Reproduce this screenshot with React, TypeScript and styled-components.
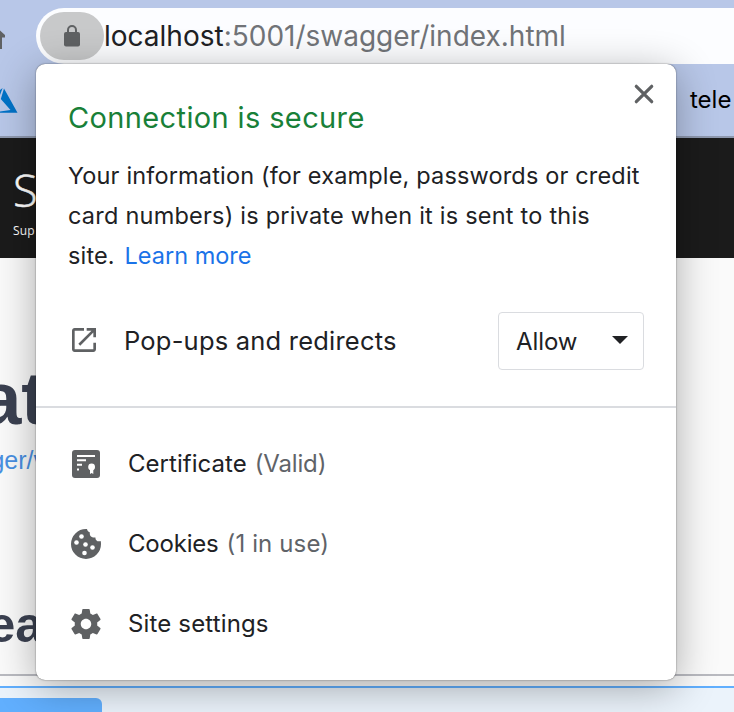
import React from 'react';
import styled, { createGlobalStyle } from 'styled-components';

const GlobalStyle = createGlobalStyle`
  * { box-sizing: border-box; }
  body { margin: 0; }
`;

const Window = styled.div`
  position: relative;
  width: 734px;
  height: 712px;
  overflow: hidden;
  background: #fafafa;
  color: #202124;
  font-family: Inter, 'Noto Sans', sans-serif;
  white-space: nowrap;
`;

const Toolbar = styled.div`
  display: flex;
  align-items: flex-start;
  height: 64px;
  padding-top: 8px;
  background: #b8c7e8;
`;

const HomeIcon = styled.svg`
  width: 36px;
  height: 56px;
  flex: none;
`;

const AddressBar = styled.div`
  display: flex;
  align-items: center;
  flex: 1;
  height: 56px;
  padding-left: 4px;
  border-radius: 28px 0 0 28px;
  background: #fcfdff;
`;

const LockChip = styled.div`
  display: grid;
  place-items: center;
  width: 64px;
  height: 48px;
  border-radius: 24px;
  background: #c8c9ca;
`;

const Url = styled.div`
  font-size: 28px;
  line-height: 56px;
  letter-spacing: 0;
  color: #717478;
`;

const Host = styled.span`
  color: #202124;
`;

const Bookmarks = styled.div`
  display: flex;
  justify-content: space-between;
  height: 74px;
  border-bottom: 2px solid #8e98ae;
  background: #b8c7e8;
`;

const AzureIcon = styled.svg`
  width: 20px;
  height: 72px;
`;

const BookmarkLabel = styled.span`
  width: 44px;
  font-size: 24px;
  line-height: 71px;
  color: #000;
`;

const SiteHeader = styled.header`
  height: 120px;
  padding: 21px 0 0 13px;
  background: #1b1b1b;
  color: #fff;
  font-family: 'Open Sans', sans-serif;
`;

const Brand = styled.div`
  font-size: 45px;
  line-height: 62px;
  font-weight: 300;
  -webkit-text-stroke: 0.5px #fff;
`;

const Tagline = styled.div`
  font-size: 12px;
  line-height: 19px;
  letter-spacing: 0.2px;
`;

const Clipped = styled.div<{ $width: number }>`
  display: flex;
  justify-content: flex-end;
  width: ${(p) => p.$width}px;
  font-family: 'Liberation Sans', Arial, sans-serif;
`;

const ApiTitle = styled(Clipped)`
  padding-top: 101px;
  font-size: 74px;
  line-height: 80px;
  font-weight: 700;
  color: #3b4151;
`;

const SpecLink = styled(Clipped)`
  padding-top: 5px;
  font-size: 25px;
  line-height: 32px;
  color: #4990e2;
`;

const TagTitle = styled(Clipped)`
  height: 198px;
  padding-top: 119px;
  font-size: 50px;
  line-height: 60px;
  font-weight: 700;
  color: #3b4151;
`;

const TagRule = styled.div`
  height: 2px;
  margin-bottom: 10px;
  background: #b9bac0;
`;

const Operation = styled.div`
  height: 26px;
  padding-top: 10px;
  border-top: 2px solid #61affe;
  background: #ebf3fb;
`;

const MethodBadge = styled.div`
  width: 102px;
  height: 14px;
  border-radius: 0 6px 0 0;
  background: #61affe;
`;

const Popover = styled.section`
  position: absolute;
  left: 36px;
  top: 64px;
  width: 640px;
  height: 616px;
  border-radius: 9px;
  background: #fff;
  box-shadow: 0 0 1.5px rgba(0, 0, 0, 0.65), 0 8px 40px rgba(0, 0, 0, 0.32);
`;

const Summary = styled.div`
  height: 344px;
  padding: 32px 32px 0;
  border-bottom: 2px solid #dadce0;
`;

const TitleRow = styled.div`
  display: flex;
  justify-content: space-between;
  height: 60px;
`;

const Title = styled.h1`
  margin: 0;
  font-size: 29px;
  line-height: 44px;
  font-weight: 400;
  letter-spacing: 0.37px;
  color: #188038;
`;

const CloseButton = styled.button`
  display: flex;
  width: 20px;
  height: 20px;
  margin: -12px -10px 0 0;
  padding: 0;
  border: 0;
  background: none;
`;

const Description = styled.p`
  margin: 0;
  font-size: 23.5px;
  line-height: 40px;
`;

const Line = styled.span<{ $spacing: number }>`
  display: block;
  letter-spacing: ${(p) => p.$spacing}px;
`;

const Link = styled.a`
  margin-left: 3px;
  letter-spacing: 0;
  color: #1a73e8;
`;

const PermissionRow = styled.div`
  display: flex;
  align-items: center;
  height: 58px;
  margin-top: 36px;
`;

const Permission = styled.div`
  display: flex;
  align-items: center;
  flex: 1;
  padding-bottom: 2px;
`;

const PermissionLabel = styled.span`
  padding-left: 24px;
  font-size: 25.5px;
  letter-spacing: 0.21px;
`;

const Select = styled.div`
  display: flex;
  align-items: center;
  justify-content: space-between;
  width: 146px;
  height: 58px;
  padding: 1px 15px 0 17px;
  border: 1px solid #dadce0;
  border-radius: 4px;
  font-size: 24px;
  letter-spacing: -0.1px;
`;

const Arrow = styled.svg`
  width: 16px;
  height: 8px;
  margin-bottom: 4px;
`;

const Menu = styled.div`
  padding-top: 16px;
`;

const MenuRow = styled.div`
  display: flex;
  align-items: center;
  height: 80px;
  padding-left: 34px;
  font-size: 24px;
  line-height: 30px;
`;

const MenuLabel = styled.span<{ $spacing: number }>`
  padding-left: 26px;
  letter-spacing: ${(p) => p.$spacing}px;
`;

const Note = styled.span<{ $spacing: number }>`
  padding-left: 8px;
  letter-spacing: ${(p) => p.$spacing}px;
  color: #5f6368;
`;

const Icon = styled.svg`
  display: block;
  flex: none;
`;

const ICON = '#5f6163';

export default function App() {
  return (
    <>
      <GlobalStyle />
      <Window>
        <Toolbar>
          <HomeIcon viewBox="0 0 36 56">
            <path d="M-8 15.5 5 27v2.5H2V41H-8z" fill={ICON} />
          </HomeIcon>
          <AddressBar>
            <LockChip>
              <Icon width="18" height="22" viewBox="0 0 18 22">
                <rect x="1" y="7" width="16" height="14.5" rx="2" fill={ICON} />
                <path d="M5 8V5a4 4 0 0 1 8 0v3" fill="none" stroke={ICON} strokeWidth="2" />
              </Icon>
            </LockChip>
            <Url>
              <Host>localhost</Host>:5001/swagger/index.html
            </Url>
          </AddressBar>
        </Toolbar>
        <Bookmarks>
          <AzureIcon viewBox="0 0 20 72">
            <path d="M0 26 2.6 24 0 31z" fill="#0072c6" />
            <path d="M4 24.5 17.5 48.7H-7L10.5 46 .8 35z" fill="#0072c6" />
          </AzureIcon>
          <BookmarkLabel>tele</BookmarkLabel>
        </Bookmarks>
        <SiteHeader>
          <Brand>Sw</Brand>
          <Tagline>Sup</Tagline>
        </SiteHeader>
        <ApiTitle $width={46}>at</ApiTitle>
        <SpecLink $width={46}>ger/v</SpecLink>
        <TagTitle $width={43}>ea</TagTitle>
        <TagRule />
        <Operation>
          <MethodBadge />
        </Operation>

        <Popover>
          <Summary>
            <TitleRow>
              <Title>Connection is secure</Title>
              <CloseButton aria-label="Close">
                <Icon width="20" height="20" viewBox="0 0 20 20">
                  <path d="m2.3 2.3 15.4 15.4m0-15.4L2.3 17.7" stroke={ICON} strokeWidth="3.2" strokeLinecap="round" />
                </Icon>
              </CloseButton>
            </TitleRow>
            <Description>
              <Line $spacing={0.16}>Your information (for example, passwords or credit</Line>
              <Line $spacing={0.22}>card numbers) is private when it is sent to this</Line>
              <Line $spacing={0.15}>
                site. <Link>Learn more</Link>
              </Line>
            </Description>
            <PermissionRow>
              <Permission>
                <Icon width="32" height="32" viewBox="0 0 24 24" fill={ICON}>
                  <path d="M19 19H5V5h7V3H5c-1.11 0-2 .9-2 2v14c0 1.1.89 2 2 2h14c1.1 0 2-.9 2-2v-5h-2v5zM14 3v2h3.59l-9.83 9.83 1.41 1.41L19 6.41V10h2V3h-7z" />
                </Icon>
                <PermissionLabel>Pop-ups and redirects</PermissionLabel>
              </Permission>
              <Select>
                Allow
                <Arrow viewBox="0 0 16 8">
                  <path d="M0 0h16L8 8z" fill="#202124" />
                </Arrow>
              </Select>
            </PermissionRow>
          </Summary>
          <Menu>
            <MenuRow>
              <Icon width="32" height="32" viewBox="0 0 32 32">
                <rect x="2" y="2" width="28" height="28" rx="3" fill={ICON} />
                <path d="M7 8h18M7 12.2h9M7 16.8h5M7 21.5h2" stroke="#fff" strokeWidth="2.1" />
                <circle cx="21.6" cy="19" r="3.4" fill="#fff" />
                <path d="M20 21h3.3v5l-1.65-1-1.65 1z" fill="#fff" />
              </Icon>
              <MenuLabel $spacing={0.03}>Certificate</MenuLabel>
              <Note $spacing={-0.15}>(Valid)</Note>
            </MenuRow>
            <MenuRow>
              <Icon width="32" height="32" viewBox="0 0 32 32">
                <path d="M16 1A15 15 0 1 0 31 16c0-1.2-.1-2.2-.4-3-2.9 1-5.3-.5-5.2-3.6-3.8.4-6.2-1.7-5.5-5C18 3.7 17.2 2.4 17 1z" fill={ICON} />
                <g fill="#fff">
                  <circle cx="11.5" cy="8.5" r="2.3" />
                  <circle cx="6.5" cy="14.5" r="2.3" />
                  <circle cx="15.5" cy="16.5" r="2.3" />
                  <circle cx="22.5" cy="19.5" r="2.3" />
                  <circle cx="14.5" cy="25" r="2.3" />
                </g>
              </Icon>
              <MenuLabel $spacing={-0.2}>Cookies</MenuLabel>
              <Note $spacing={0.12}>(1 in use)</Note>
            </MenuRow>
            <MenuRow>
              <Icon width="32" height="32" viewBox="1.33 1.33 21.34 21.34" fill={ICON}>
                <path d="M19.43 12.98c.04-.32.07-.64.07-.98s-.03-.66-.07-.98l2.11-1.65c.19-.15.24-.42.12-.64l-2-3.46c-.12-.22-.39-.3-.61-.22l-2.49 1c-.52-.4-1.08-.73-1.69-.98l-.38-2.65C14.46 2.18 14.25 2 14 2h-4c-.25 0-.46.18-.49.42l-.38 2.65c-.61.25-1.17.59-1.69.98l-2.49-1c-.23-.09-.49 0-.61.22l-2 3.46c-.13.22-.07.49.12.64l2.11 1.65c-.04.32-.07.65-.07.98s.03.66.07.98l-2.11 1.65c-.19.15-.24.42-.12.64l2 3.46c.12.22.39.3.61.22l2.49-1c.52.4 1.08.73 1.69.98l.38 2.65c.03.24.24.42.49.42h4c.25 0 .46-.18.49-.42l.38-2.65c.61-.25 1.17-.59 1.69-.98l2.49 1c.23.09.49 0 .61-.22l2-3.46c.12-.22.07-.49-.12-.64l-2.11-1.65zM12 15.5c-1.93 0-3.5-1.57-3.5-3.5s1.57-3.5 3.5-3.5 3.5 1.57 3.5 3.5-1.57 3.5-3.5 3.5z" />
              </Icon>
              <MenuLabel $spacing={0.15}>Site settings</MenuLabel>
            </MenuRow>
          </Menu>
        </Popover>
      </Window>
    </>
  );
}
